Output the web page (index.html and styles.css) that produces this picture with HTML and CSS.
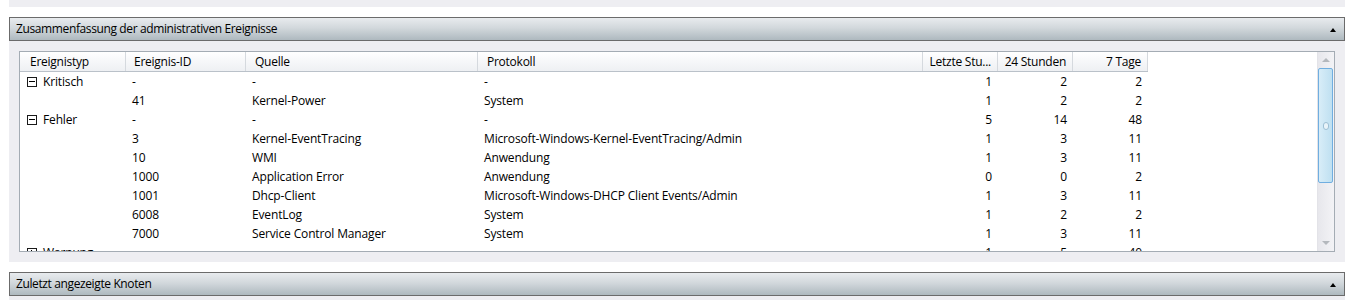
FILE: index.html
```html
<!DOCTYPE html>
<html lang="de">
<head>
<meta charset="utf-8">
<title>Zusammenfassung</title>
<link rel="stylesheet" href="styles.css">
</head>
<body>
<div class="page">
  <div class="top-band"></div>

  <div class="section">
    <div class="section-header">
      <span class="section-title">Zusammenfassung der administrativen Ereignisse</span>
      <span class="collapse-arrow"></span>
    </div>
    <div class="section-body">
      <div class="listbox">
        <div class="list-area">
          <div class="row head">
            <div class="cell c1">Ereignistyp</div>
            <div class="cell c2">Ereignis-ID</div>
            <div class="cell c3">Quelle</div>
            <div class="cell c4">Protokoll</div>
            <div class="cell c5 num">Letzte Stu...</div>
            <div class="cell c6 num">24 Stunden</div>
            <div class="cell c7 num">7 Tage</div>
          </div>
          <div class="rows">
            <div class="row">
              <div class="cell c1 group"><span class="tog minus"></span>Kritisch</div>
              <div class="cell c2">-</div><div class="cell c3">-</div><div class="cell c4">-</div>
              <div class="cell c5 num">1</div><div class="cell c6 num">2</div><div class="cell c7 num">2</div>
            </div>
            <div class="row">
              <div class="cell c1"></div>
              <div class="cell c2">41</div><div class="cell c3">Kernel-Power</div><div class="cell c4">System</div>
              <div class="cell c5 num">1</div><div class="cell c6 num">2</div><div class="cell c7 num">2</div>
            </div>
            <div class="row">
              <div class="cell c1 group"><span class="tog minus"></span>Fehler</div>
              <div class="cell c2">-</div><div class="cell c3">-</div><div class="cell c4">-</div>
              <div class="cell c5 num">5</div><div class="cell c6 num">14</div><div class="cell c7 num">48</div>
            </div>
            <div class="row">
              <div class="cell c1"></div>
              <div class="cell c2">3</div><div class="cell c3">Kernel-EventTracing</div><div class="cell c4">Microsoft-Windows-Kernel-EventTracing/Admin</div>
              <div class="cell c5 num">1</div><div class="cell c6 num">3</div><div class="cell c7 num">11</div>
            </div>
            <div class="row">
              <div class="cell c1"></div>
              <div class="cell c2">10</div><div class="cell c3">WMI</div><div class="cell c4">Anwendung</div>
              <div class="cell c5 num">1</div><div class="cell c6 num">3</div><div class="cell c7 num">11</div>
            </div>
            <div class="row">
              <div class="cell c1"></div>
              <div class="cell c2">1000</div><div class="cell c3">Application Error</div><div class="cell c4">Anwendung</div>
              <div class="cell c5 num">0</div><div class="cell c6 num">0</div><div class="cell c7 num">2</div>
            </div>
            <div class="row">
              <div class="cell c1"></div>
              <div class="cell c2">1001</div><div class="cell c3">Dhcp-Client</div><div class="cell c4">Microsoft-Windows-DHCP Client Events/Admin</div>
              <div class="cell c5 num">1</div><div class="cell c6 num">3</div><div class="cell c7 num">11</div>
            </div>
            <div class="row">
              <div class="cell c1"></div>
              <div class="cell c2">6008</div><div class="cell c3">EventLog</div><div class="cell c4">System</div>
              <div class="cell c5 num">1</div><div class="cell c6 num">2</div><div class="cell c7 num">2</div>
            </div>
            <div class="row">
              <div class="cell c1"></div>
              <div class="cell c2">7000</div><div class="cell c3">Service Control Manager</div><div class="cell c4">System</div>
              <div class="cell c5 num">1</div><div class="cell c6 num">3</div><div class="cell c7 num">11</div>
            </div>
            <div class="row">
              <div class="cell c1 group"><span class="tog plus"></span>Warnung</div>
              <div class="cell c2">-</div><div class="cell c3">-</div><div class="cell c4">-</div>
              <div class="cell c5 num">1</div><div class="cell c6 num">5</div><div class="cell c7 num">40</div>
            </div>
          </div>
        </div>
        <div class="scrollbar">
          <div class="sb-btn up"><span class="sb-tri up-tri"></span></div>
          <div class="sb-thumb"><span class="grip"></span></div>
          <div class="sb-track"></div>
          <div class="sb-btn down"><span class="sb-tri down-tri"></span></div>
        </div>
      </div>
    </div>
  </div>

  <div class="section second">
    <div class="section-header">
      <span class="section-title">Zuletzt angezeigte Knoten</span>
      <span class="collapse-arrow"></span>
    </div>
    <div class="section-body short"></div>
  </div>
</div>
</body>
</html>
```

FILE: styles.css
```css
html, body {
  margin: 0;
  padding: 0;
  background: #ffffff;
}

body {
  font-family: "Open Sans", "Noto Sans", "DejaVu Sans", sans-serif;
  font-size: 12px;
  color: #000000;
  width: 1351px;
  height: 300px;
  overflow: hidden;
}

.page {
  display: flex;
  flex-direction: column;
  padding-left: 9px;
  width: 1336px;
}

.top-band {
  height: 7px;
  background: #eeeef2;
  margin-bottom: 10px;
}

.section {
  display: flex;
  flex-direction: column;
}

.section.second {
  margin-top: 10px;
}

.section-header {
  height: 22px;
  border: 1px solid #6b6b6b;
  background: linear-gradient(to bottom, #e8ebee 0%, #d2d8dc 45%, #aeb9bf 100%);
  display: flex;
  align-items: center;
  justify-content: space-between;
  padding: 0 8px 0 6px;
  width: 1320px;
}

.section-title {
  letter-spacing: -0.38px;
  line-height: 22px;
}

.collapse-arrow {
  width: 0;
  height: 0;
  border-left: 3px solid transparent;
  border-right: 3px solid transparent;
  border-bottom: 4px solid #000000;
  margin-top: 1px;
}

.section-body {
  background: #eeeef2;
  padding: 10px;
  width: 1316px;
}

.section-body.short {
  height: 4px;
  padding: 0;
  width: 1336px;
}

.listbox {
  display: flex;
  border: 1px solid #a4acb4;
  background: #ffffff;
  height: 199px;
  width: 1314px;
}

.list-area {
  width: 1298px;
  overflow: hidden;
  display: flex;
  flex-direction: column;
}

.rows {
  overflow: hidden;
  flex: 1;
}

.row {
  display: flex;
  height: 19px;
  align-items: center;
  letter-spacing: -0.15px;
}

.row.head {
  height: 19px;
  border-bottom: 1px solid #bac1c9;
  width: 1128px;
  background: linear-gradient(to bottom, #ffffff 0%, #f6f7f9 50%, #eef0f3 100%);
  flex: none;
  letter-spacing: -0.25px;
}

.cell {
  white-space: nowrap;
  overflow: hidden;
  padding: 0 6px;
  box-sizing: border-box;
  height: 100%;
  display: flex;
  align-items: center;
}

.head .cell {
  border-right: 1px solid #d5d9de;
  padding-left: 9px;
}

.head .cell.num {
  padding-left: 4px;
  padding-right: 6px;
}

.c1 { width: 106px; }
.c2 { width: 120px; }
.c3 { width: 232px; }
.c4 { width: 445px; }
.c5 { width: 75px; }
.c6 { width: 75px; }
.c7 { width: 75px; }

.head .c1 { padding-left: 10px; }
.head .c2 { padding-left: 8px; }

.num {
  justify-content: flex-end;
}

.group {
  padding-left: 7px;
}

.tog {
  width: 10px;
  height: 10px;
  border: 1px solid #1a1a1a;
  box-sizing: border-box;
  position: relative;
  margin-right: 6px;
  flex: none;
}

.tog::before {
  content: "";
  position: absolute;
  left: 1px;
  right: 1px;
  top: 3px;
  height: 1px;
  background: #000000;
}

.tog.plus::after {
  content: "";
  position: absolute;
  top: 1px;
  bottom: 1px;
  left: 3px;
  width: 1px;
  background: #000000;
}

.scrollbar {
  width: 16px;
  display: flex;
  flex-direction: column;
  border-left: 1px solid #e3e3e8;
  background: linear-gradient(to right, #e7e7ec, #f3f3f6);
}

.sb-btn {
  height: 16px;
  display: flex;
  align-items: center;
  justify-content: center;
  flex: none;
}

.sb-tri {
  width: 0;
  height: 0;
  border-left: 4px solid transparent;
  border-right: 4px solid transparent;
}

.up-tri {
  border-bottom: 4px solid #b4b8bd;
}

.down-tri {
  border-top: 4px solid #b4b8bd;
}

.sb-thumb {
  height: 113px;
  margin: 0 1px 0 0;
  border: 1px solid #70aee0;
  border-radius: 2px;
  background: linear-gradient(to right, #d8edf8, #bfe0f1);
  display: flex;
  align-items: center;
  justify-content: center;
  flex: none;
}

.grip {
  width: 6px;
  height: 8px;
  border: 1px solid #9dbfd4;
  border-radius: 3px;
  box-sizing: border-box;
  background: #e9f4fa;
}

.sb-track {
  flex: 1;
}
```
